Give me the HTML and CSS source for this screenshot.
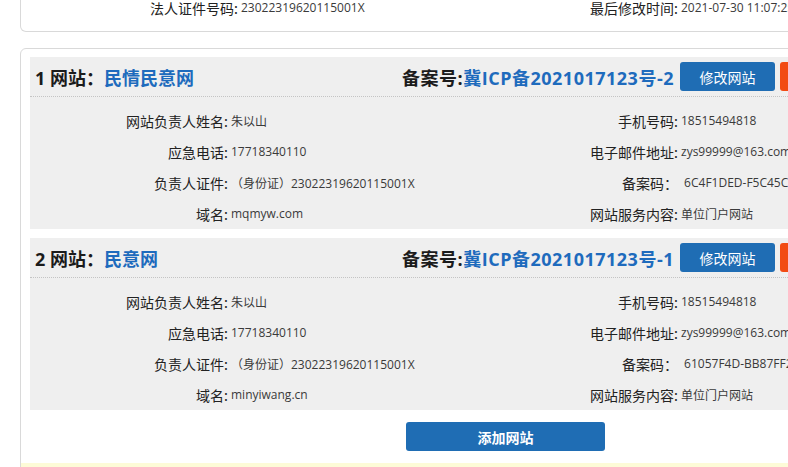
FILE: index.html
```html
<!DOCTYPE html>
<html>
<head>
  <meta charset="utf-8">
  <title>网站备案信息</title>
  <link rel="stylesheet" href="styles.css">
</head>
<body>
  <div class="page">
    <div class="panel summary">
      <div class="info-grid summary-grid">
        <span class="label">法人证件号码:</span><span class="value">23022319620115001X</span>
        <span class="label">最后修改时间:</span><span class="value">2021-07-30 11:07:25</span>
      </div>
    </div>

    <div class="panel sites">
      <div class="panel-body">
        <div class="site">
          <div class="site-head">
            <h3 class="site-title">1 网站：<span class="blue">民情民意网</span></h3>
            <div class="site-icp">备案号:<span class="blue">冀ICP备2021017123号-2</span></div>
            <button class="btn btn-blue">修改网站</button>
            <button class="btn btn-red">删除网站</button>
          </div>
          <div class="info-grid">
            <span class="label">网站负责人姓名:</span><span class="value">朱以山</span>
            <span class="label">手机号码:</span><span class="value">18515494818</span>
            <span class="label">应急电话:</span><span class="value">17718340110</span>
            <span class="label">电子邮件地址:</span><span class="value">zys99999@163.com</span>
            <span class="label">负责人证件:</span><span class="value">（身份证）23022319620115001X</span>
            <span class="label">备案码：</span><span class="value">&nbsp;6C4F1DED-F5C45C3A-8E1B</span>
            <span class="label">域名:</span><span class="value">mqmyw.com</span>
            <span class="label">网站服务内容:</span><span class="value">单位门户网站</span>
          </div>
        </div>

        <div class="site">
          <div class="site-head">
            <h3 class="site-title">2 网站：<span class="blue">民意网</span></h3>
            <div class="site-icp">备案号:<span class="blue">冀ICP备2021017123号-1</span></div>
            <button class="btn btn-blue">修改网站</button>
            <button class="btn btn-red">删除网站</button>
          </div>
          <div class="info-grid">
            <span class="label">网站负责人姓名:</span><span class="value">朱以山</span>
            <span class="label">手机号码:</span><span class="value">18515494818</span>
            <span class="label">应急电话:</span><span class="value">17718340110</span>
            <span class="label">电子邮件地址:</span><span class="value">zys99999@163.com</span>
            <span class="label">负责人证件:</span><span class="value">（身份证）23022319620115001X</span>
            <span class="label">备案码：</span><span class="value">&nbsp;61057F4D-BB87FF2C-91A0</span>
            <span class="label">域名:</span><span class="value">minyiwang.cn</span>
            <span class="label">网站服务内容:</span><span class="value">单位门户网站</span>
          </div>
        </div>

        <div class="add-row">
          <button class="btn btn-blue btn-add">添加网站</button>
        </div>
      </div>
      <div class="panel-foot">温馨提示：如需变更备案信息，请先修改网站信息后再提交审核。</div>
    </div>
  </div>
</body>
</html>
```

FILE: styles.css
```css
html, body {
  overflow: hidden;
}

body {
  margin: 0;
  background: #fff;
  color: #222;
  font-family: "Open Sans", "Noto Sans CJK SC", sans-serif;
}

.page {
  width: 1000px;
  padding-left: 20px;
}

.panel {
  border: 1px solid #d9d9d9;
  border-radius: 6px;
  background: #fff;
}

.summary {
  margin-top: -9px;
  border-top-color: transparent;
  padding-bottom: 8px;
}

.sites {
  margin-top: 16px;
  overflow: hidden;
}

.panel-body {
  padding: 8px 0 0 9px;
}

/* label / value table */
.info-grid {
  display: grid;
  grid-template-columns: 198px 252px 198px 1fr;
  grid-auto-rows: 31px;
  align-items: center;
}

.summary-grid {
  grid-template-columns: 217px 242px 198px 1fr;
}

.label {
  text-align: right;
  font-family: "Noto Sans CJK SC", sans-serif;
  font-size: 14px;
  color: #222;
  white-space: nowrap;
}

.value {
  padding-left: 3px;
  font-size: 12px;
  color: #3a3a3a;
  white-space: nowrap;
  font-family: "Open Sans", "Noto Sans CJK SC", sans-serif;
}

.site {
  width: 900px;
  background: #efefef;
  margin-bottom: 9px;
}

.site-head {
  display: flex;
  align-items: center;
  height: 39px;
  padding: 0 55px 0 5px;
  border-bottom: 1px dotted #c4c4c4;
  margin-bottom: 8px;
}

.site-title {
  margin: 0;
  font-family: "Open Sans", "Noto Sans CJK SC", sans-serif;
  font-size: 18px;
  font-weight: 700;
  color: #1b1b1b;
}

.blue {
  color: #1e6bbd;
}

.site-icp {
  margin-left: auto;
  margin-right: 1px;
  font-size: 18px;
  font-weight: 700;
  color: #1b1b1b;
  letter-spacing: 0.5px;
}

.btn {
  border: none;
  border-radius: 3px;
  height: 29px;
  width: 95px;
  margin-left: 5px;
  font-family: "Noto Sans CJK SC", sans-serif;
  font-size: 14px;
  color: #fff;
  cursor: pointer;
}

.btn-blue {
  background: #1f6db4;
}

.btn-red {
  background: #f24b13;
}

.add-row {
  padding: 3px 0 12px 376px;
}

.btn-add {
  width: 199px;
  margin-left: 0;
  font-size: 14px;
  font-weight: 700;
}

.panel-foot {
  background: #fdfbd7;
  padding: 3px 10px 6px;
  font-family: "Noto Sans CJK SC", sans-serif;
  font-size: 13px;
  color: #8a6d3b;
}
```
